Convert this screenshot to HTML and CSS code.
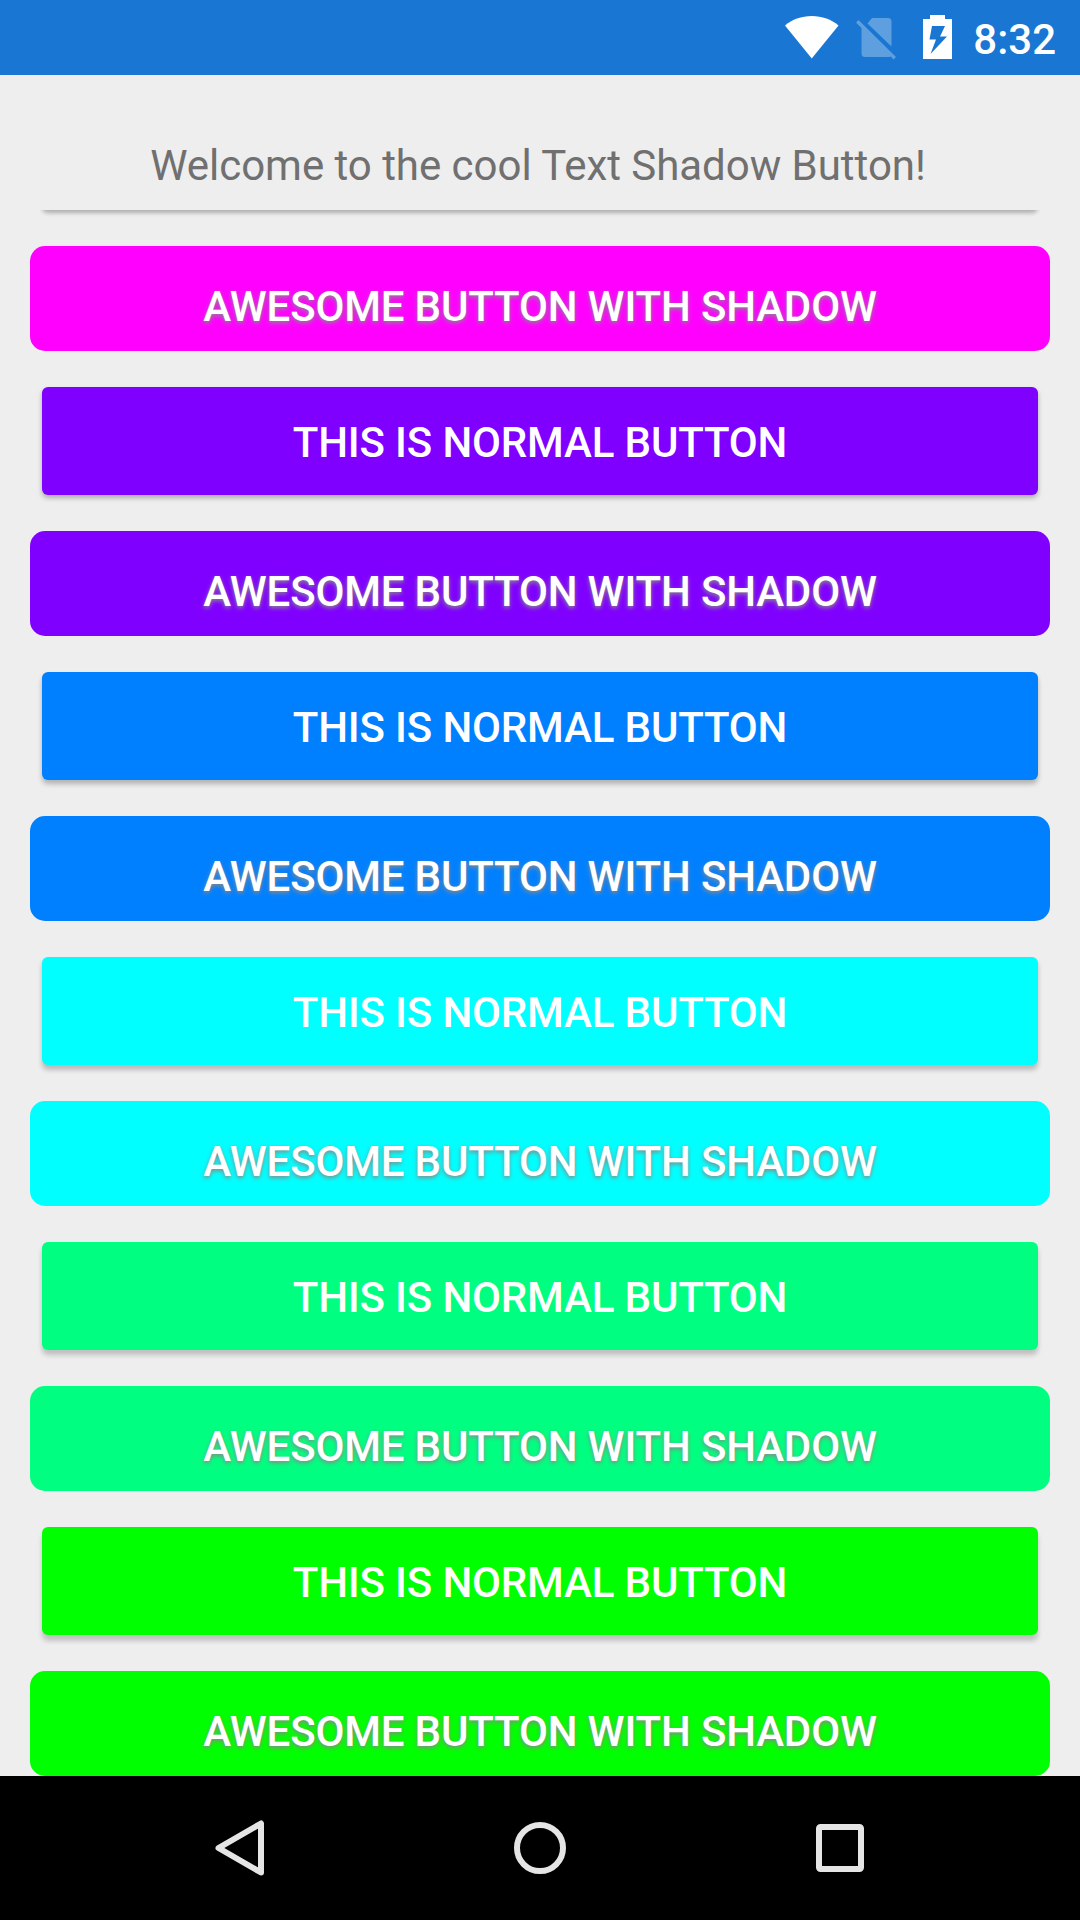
FILE: index.html
```html
<!DOCTYPE html>
<html lang="en">
<head>
<meta charset="utf-8">
<title>Text Shadow Button</title>
<link rel="stylesheet" href="styles.css">
</head>
<body>
<div class="screen">
  <header class="status">
    <svg class="wifi" width="54" height="43" viewBox="0 0 54 43"><path fill="#fff" d="M0 9.5C7 3.500 16.500 0 26.750 0S46.500 3.500 53.500 9.500L26.750 42.500Z"/></svg>
    <svg class="sim" width="40" height="42" viewBox="0 0 40 42"><path fill="#fff" fill-opacity=".3" d="M2.500 2 0 4.500 5.500 10V35.500Q5.500 39 9 39H32.500Q34 39 34.800 38.600L37.500 41.500 40 39ZM16 0H32Q35.500 0 35.500 3.500V28.500L11.500 5.500Z"/></svg>
    <svg class="battery" width="29" height="44" viewBox="0 0 29 44"><path fill="#fff" fill-rule="evenodd" d="M7 0H22V4H29V44H0V4H7ZM9 11 6.500 24.500H13L7.500 39 24 21.500H17L22 11Z"/></svg>
    <span class="clock">8:32</span>
  </header>
  <main class="list">
    <div class="welcome">Welcome to the cool Text Shadow Button!</div>
    <button class="btn awesome magenta">Awesome button with shadow</button>
    <button class="btn normal violet depth-1">This is normal button</button>
    <button class="btn awesome violet">Awesome button with shadow</button>
    <button class="btn normal azure depth-2">This is normal button</button>
    <button class="btn awesome azure">Awesome button with shadow</button>
    <button class="btn normal cyan depth-3">This is normal button</button>
    <button class="btn awesome cyan">Awesome button with shadow</button>
    <button class="btn normal spring depth-4">This is normal button</button>
    <button class="btn awesome spring">Awesome button with shadow</button>
    <button class="btn normal green depth-5">This is normal button</button>
    <button class="btn awesome green">Awesome button with shadow</button>
  </main>
  <nav class="navbar">
    <svg width="60" height="60" viewBox="0 0 60 60"><path d="M51 5.500V54.500L8.500 30Z"/></svg>
    <svg width="60" height="60" viewBox="0 0 60 60"><circle cx="30" cy="30" r="23"/></svg>
    <svg width="60" height="60" viewBox="0 0 60 60"><rect x="9" y="9" width="42" height="42" rx="1.500"/></svg>
  </nav>
</div>
</body>
</html>
```
FILE: styles.css
```css
body {
  margin: 0;
  font-family: Roboto, "Liberation Sans", sans-serif;
  font-size: 42px;
  line-height: 49px;
}

.screen {
  display: flex;
  flex-direction: column;
  width: 1080px;
  height: 1920px;
  overflow: hidden;
  background: #eee;
}

.status {
  display: flex;
  align-items: flex-start;
  justify-content: flex-end;
  box-sizing: border-box;
  height: 75px;
  padding-right: 24px;
  background: #1976d2;
}

.wifi { margin: 16px 17px 0 0; }
.sim { margin: 18px 27px 0 0; }
.battery { margin: 15px 21px 0 0; }

.clock {
  margin-top: 15px;
  color: #fff;
  font-weight: 500;
}

.list {
  display: flex;
  flex: 1;
  flex-direction: column;
  gap: 36px;
  padding: 27px 30px 0;
}

.welcome {
  position: relative;
  box-sizing: border-box;
  height: 108px;
  margin: 0 12px;
  padding: 39px 4px 0 0;
  border-radius: 6px;
  color: #707070;
  letter-spacing: -.03px;
  text-align: center;
  white-space: nowrap;
}

/* Only the part of the shadow that falls below the label is visible. */
.welcome::after {
  content: "";
  position: absolute;
  inset: 0;
  border-radius: 6px;
  box-shadow: 0 3px 4px rgba(0, 0, 0, .27);
  clip-path: inset(108px -12px -12px);
}

.btn {
  box-sizing: border-box;
  border: 0;
  color: #fff;
  font: 500 42px/49px Roboto, "Liberation Sans", sans-serif;
  letter-spacing: -.16px;
  text-align: center;
  text-transform: uppercase;
}

.awesome {
  height: 105px;
  padding: 16px 0 0;
  border-radius: 15px;
  text-shadow: 0 2px 4px #888;
}

.normal {
  height: 108px;
  margin: 0 12px;
  padding: 3px 0 0;
  border-radius: 6px;
}

.depth-1 { box-shadow: 0 3px 5px rgba(0, 0, 0, .28); }
.depth-2 { box-shadow: 0 4px 5px rgba(0, 0, 0, .25); }
.depth-3 { box-shadow: 0 4.500px 5px rgba(0, 0, 0, .22); }
.depth-4 { box-shadow: 0 5px 5px rgba(0, 0, 0, .2); }
.depth-5 { box-shadow: 0 6px 5px rgba(0, 0, 0, .19); }

.magenta { background: #f0f; }
.violet { background: #8000ff; }
.azure { background: #0080ff; }
.cyan { background: #0ff; }
.spring { background: #00ff80; }
.green { background: #0f0; }

.navbar {
  display: flex;
  align-items: center;
  justify-content: center;
  gap: 240px;
  height: 144px;
  background: #000;
}

.navbar svg {
  fill: none;
  stroke: #e5e5e5;
  stroke-width: 6;
  stroke-linejoin: round;
}
```
